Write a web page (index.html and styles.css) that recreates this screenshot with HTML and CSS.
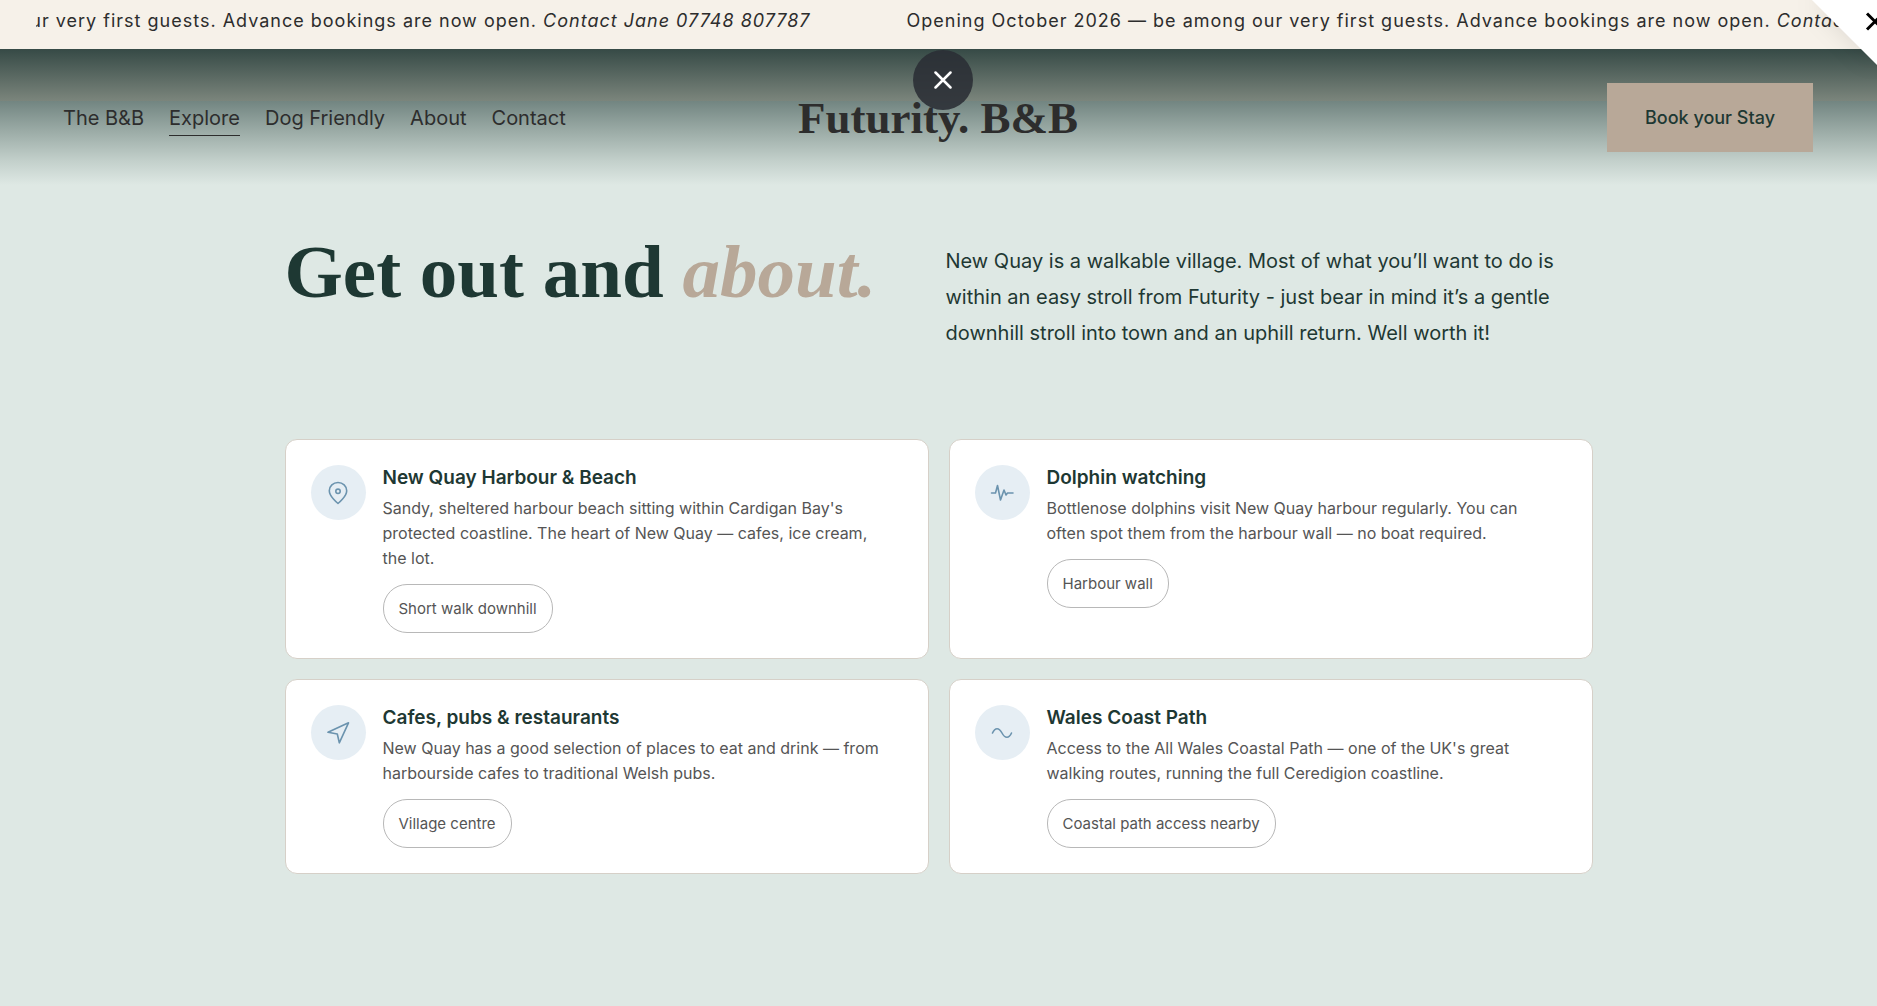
FILE: index.html
```html
<!DOCTYPE html>
<html lang="en">
<head>
<meta charset="utf-8">
<meta name="viewport" content="width=device-width, initial-scale=1">
<title>Explore | Futurity. B&amp;B</title>
<link rel="stylesheet" href="styles.css">
</head>
<body>
<div class="banner">
  <div class="banner-window">
    <div class="banner-track">
      <p class="banner-item">Opening October 2026 — be among our very first guests. Advance bookings are now open. <em>Contact Jane 07748 807787</em></p>
      <p class="banner-item">Opening October 2026 — be among our very first guests. Advance bookings are now open. <em>Contact Jane 07748 807787</em></p>
    </div>
  </div>
</div>
<header class="header">
  <nav class="nav">
    <a class="nav-link" href="#">The B&amp;B</a>
    <a class="nav-link nav-link-current" href="#" aria-current="page">Explore</a>
    <a class="nav-link" href="#">Dog Friendly</a>
    <a class="nav-link" href="#">About</a>
    <a class="nav-link" href="#">Contact</a>
  </nav>
  <a class="logo" href="#">Futurity. B&amp;B</a>
  <a class="book" href="#">Book your Stay</a>
</header>
<button class="close" type="button" aria-label="Close">
  <svg width="18" height="18" viewBox="0 0 18 18"><path d="M1.500 1.500 16.500 16.500M16.500 1.500 1.500 16.500"/></svg>
</button>
<button class="corner" type="button" aria-label="Dismiss">
  <svg width="80" height="80" viewBox="0 0 80 80"><path class="corner-fold" d="M15 0H80V65Z"/><path class="corner-cross" d="M70 13.500 86 29.500M86 13.500 70 29.500"/></svg>
</button>
<main class="main">
  <section class="intro">
    <h1 class="title">Get out and <em>about.</em></h1>
    <p class="lead">New Quay is a walkable village. Most of what you’ll want to do is within an easy stroll from Futurity - just bear in mind it’s a gentle downhill stroll into town and an uphill return. Well worth it!</p>
  </section>
  <section class="cards">
    <article class="card">
      <span class="icon"><svg width="24" height="24" viewBox="0 0 24 24"><path d="M12 22.500S3.300 15.500 3.300 9.700C3.300 5 7.200 1.500 12 1.500s8.700 3.500 8.700 8.200C20.700 15.500 12 22.500 12 22.500Z"/><circle cx="12" cy="10.300" r="2.200"/></svg></span>
      <div class="card-body">
        <h2 class="card-title">New Quay Harbour &amp; Beach</h2>
        <p class="card-text">Sandy, sheltered harbour beach sitting within Cardigan Bay's protected coastline. The heart of New Quay — cafes, ice cream, the lot.</p>
        <span class="tag">Short walk downhill</span>
      </div>
    </article>
    <article class="card">
      <span class="icon"><svg width="24" height="24" viewBox="0 0 24 24"><path d="M1.500 12H5.500L7.500 4.500 10.500 19 14 9 16 14 17.500 12H23"/></svg></span>
      <div class="card-body">
        <h2 class="card-title">Dolphin watching</h2>
        <p class="card-text">Bottlenose dolphins visit New Quay harbour regularly. You can often spot them from the harbour wall — no boat required.</p>
        <span class="tag">Harbour wall</span>
      </div>
    </article>
    <article class="card">
      <span class="icon"><svg width="24" height="24" viewBox="0 0 24 24"><path d="M2 11.300 22.500 1.800 13.300 21.800 11.300 13Z"/></svg></span>
      <div class="card-body">
        <h2 class="card-title">Cafes, pubs &amp; restaurants</h2>
        <p class="card-text">New Quay has a good selection of places to eat and drink — from harbourside cafes to traditional Welsh pubs.</p>
        <span class="tag">Village centre</span>
      </div>
    </article>
    <article class="card">
      <span class="icon"><svg width="24" height="24" viewBox="0 0 24 24"><path d="M2.500 12C5 6.300 9 6.300 12 12S19 17.700 21.500 12"/></svg></span>
      <div class="card-body">
        <h2 class="card-title">Wales Coast Path</h2>
        <p class="card-text">Access to the All Wales Coastal Path — one of the UK's great walking routes, running the full Ceredigion coastline.</p>
        <span class="tag">Coastal path access nearby</span>
      </div>
    </article>
  </section>
</main>
</body>
</html>
```
FILE: styles.css
```css
* { box-sizing: border-box; }

body {
  margin: 0;
  min-height: 100vh;
  background: #dee8e4;
  color: #1e3833;
  font-family: Inter, "Liberation Sans", sans-serif;
  overflow-x: hidden;
}

h1, h2, p { margin: 0; }
a { color: inherit; text-decoration: none; }
button { border: 0; padding: 0; background: none; }
svg { display: block; fill: none; stroke-linecap: round; stroke-linejoin: round; }

.banner {
  padding: 8px 36px 15px;
  background: #f6f1e9;
}
.banner-window { overflow: hidden; }
.banner-track {
  display: flex;
  gap: 96px;
  width: max-content;
  transform: translateX(-363px);
}
.banner-item {
  color: #2d2d2d;
  font-size: 18px;
  line-height: 26px;
  letter-spacing: 1px;
  white-space: nowrap;
}

.header {
  display: grid;
  grid-template-columns: 1fr auto 1fr;
  align-items: center;
  padding: 34px 64px 35px 63px;
  background:
    linear-gradient(#364a46, #7b857c) top / 100% 52px no-repeat,
    linear-gradient(#728581 52px, #9baba6 82px, #c3d0cb 112px, #dee8e4 136px);
}
.nav {
  display: flex;
  gap: 25px;
  color: #2d2d2d;
  font-size: 20px;
  line-height: 24px;
}
.nav-link {
  padding: 6px 0 5px;
  border-bottom: 1px solid transparent;
}
.nav-link-current { border-color: #2d2d2d; }
.logo {
  color: #2d2d2d;
  font-family: "Liberation Serif", serif;
  font-size: 45px;
  font-weight: 700;
  line-height: 56px;
}
.book {
  justify-self: end;
  padding: 23px 38px 22px;
  background: #b8a898;
  font-size: 18px;
  font-weight: 500;
  line-height: 24px;
}

.close {
  position: absolute;
  top: 50px;
  left: calc(50% + 4px);
  display: grid;
  place-items: center;
  width: 60px;
  height: 60px;
  margin-left: -30px;
  border-radius: 50%;
  background: rgba(42, 46, 52, .88);
}
.close svg { stroke: #fff; stroke-width: 2.5; }
.corner {
  position: absolute;
  top: 0;
  right: 0;
}
.corner svg { filter: drop-shadow(0 0 12px rgba(0, 0, 0, .1)); }
.corner-fold { fill: #fff; }
.corner-cross { stroke: #000; stroke-width: 3; stroke-linecap: butt; }

.main {
  width: 70%;
  max-width: 1308px;
  margin: 0 auto;
  padding: 56px 0 88px;
}
.intro {
  display: grid;
  grid-template-columns: 1fr 1fr;
  gap: 14px;
  margin-bottom: 88px;
}
.title {
  font-family: "Liberation Serif", serif;
  font-size: 75px;
  font-weight: 700;
  line-height: 58px;
  white-space: nowrap;
}
.title em { color: #b8a898; }
.lead {
  font-size: 20px;
  line-height: 36px;
}

.cards {
  display: grid;
  grid-template-columns: 1fr 1fr;
  gap: 20px;
}
.card {
  display: flex;
  align-items: flex-start;
  gap: 17px;
  padding: 25px;
  border: 1px solid #d6d0c8;
  border-radius: 12px;
  background: #fff;
}
.icon {
  flex: none;
  display: grid;
  place-items: center;
  width: 55px;
  height: 55px;
  border-radius: 50%;
  background: #e6eef4;
}
.icon svg { stroke: #6b93ae; stroke-width: 1.6; }
.card-body { padding-right: 16px; }
.card-title {
  margin-bottom: 6px;
  font-size: 19px;
  font-weight: 600;
  line-height: 25px;
}
.card-text {
  margin-bottom: 13px;
  color: #555;
  font-size: 16px;
  line-height: 25px;
}
.tag {
  display: inline-block;
  vertical-align: top;
  padding: 11px 15px;
  border: 1px solid #b8b8b8;
  border-radius: 24px;
  color: #555;
  font-size: 15px;
  line-height: 25px;
}
```
